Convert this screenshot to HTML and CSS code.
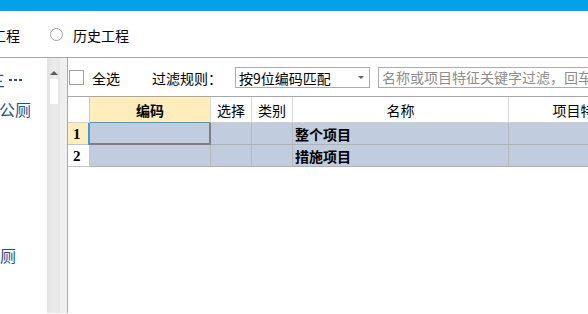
FILE: index.html
```html
<!DOCTYPE html>
<html lang="zh-CN">
<head>
<meta charset="utf-8">
<link rel="stylesheet" href="styles.css">
</head>
<body>
<div class="topbar"></div>
<div class="tabs">
  <span class="tab-cur">工程</span>
  <span class="radio"></span>
  <span class="tab-label">历史工程</span>
</div>
<div class="main">
  <div class="tree">
    <div class="node n1"><span class="clip-a">三</span><span class="dash"></span><span class="dash"></span><span class="dash"></span></div>
    <div class="node n2"><span class="clip-b">公厕</span></div>
    <div class="node n3">厕</div>
  </div>
  <div class="vscroll">
    <div class="track">
      <div class="arrow"></div>
      <div class="thumb"></div>
    </div>
  </div>
  <div class="content">
    <div class="toolbar">
      <span class="check"></span>
      <span class="lbl-all">全选</span>
      <span class="lbl-filter">过滤规则：</span>
      <div class="select"><span>按9位编码匹配</span><span class="caret"></span></div>
      <div class="search">名称或项目特征关键字过滤，回车</div>
    </div>
    <div class="grid">
      <div class="c hdr rh"></div>
      <div class="c hdr code">编码</div>
      <div class="c hdr">选择</div>
      <div class="c hdr">类别</div>
      <div class="c hdr">名称</div>
      <div class="c hdr">项目特征</div>

      <div class="c rh cur">1</div>
      <div class="c row sel"></div>
      <div class="c row"></div>
      <div class="c row"></div>
      <div class="c row name">整个项目</div>
      <div class="c row"></div>

      <div class="c rh">2</div>
      <div class="c row"></div>
      <div class="c row"></div>
      <div class="c row"></div>
      <div class="c row name">措施项目</div>
      <div class="c row"></div>
    </div>
  </div>
</div>
</body>
</html>
```
FILE: styles.css
```css
html, body {
  margin: 0;
  padding: 0;
}
body {
  width: 588px;
  height: 314px;
  overflow: hidden;
  background: #ffffff;
  font-family: "Noto Sans CJK SC", "Noto Sans", sans-serif;
  font-size: 14px;
  color: #000;
}
.topbar {
  height: 11px;
  background: #00a2e8;
}
.tabs {
  height: 47px;
  display: flex;
  align-items: center;
  border-bottom: 1px solid #a8a8a8;
  overflow: hidden;
  padding-top: 1px;
  box-sizing: border-box;
}
.tab-cur {
  margin-left: -8px;
  line-height: 16px;
}
.radio {
  width: 11px;
  height: 11px;
  border: 1px solid #a0a0a0;
  border-radius: 50%;
  margin-left: 30px;
  box-sizing: content-box;
}
.tab-label {
  margin-left: 10px;
  line-height: 16px;
}
.main {
  display: flex;
  height: 255px;
}
.tree {
  width: 47px;
  overflow: hidden;
  color: #1f4e8c;
  flex: none;
  font-size: 16px;
}
.node {
  height: 16px;
  line-height: 16px;
  white-space: nowrap;
  display: flex;
  align-items: center;
}
.n1 { margin-top: 14px; }
.n2 { margin-top: 13px; }
.n3 { margin-top: 130px; }
.clip-a { margin-left: -11px; }
.clip-b { margin-left: -1px; }
.dash {
  display: inline-block;
  width: 3px;
  height: 2px;
  background: #1f4e8c;
  margin-left: 2px;
  flex: none;
}
.clip-a + .dash { margin-left: 4px; }
.vscroll {
  width: 20px;
  flex: none;
  background: #efefef;
  border-right: 1px solid #a8a8a8;
}
.track {
  width: 13px;
  height: 100%;
  background: linear-gradient(to right, #e2e2e2, #ececec 60%, #e4e4e4);
  padding-top: 13px;
  box-sizing: border-box;
}
.arrow {
  margin-left: 3px;
  width: 0;
  height: 0;
  border-left: 4px solid transparent;
  border-right: 4px solid transparent;
  border-bottom: 4px solid #5a5a5a;
}
.thumb {
  margin: 4px 0 0 3px;
  width: 8px;
  height: 25px;
  background: #ffffff;
}
.content {
  flex: 1;
  min-width: 0;
  overflow: hidden;
}
.toolbar {
  height: 38px;
  display: flex;
  align-items: center;
  white-space: nowrap;
  padding-top: 1px;
  box-sizing: border-box;
}
.check {
  width: 13px;
  height: 13px;
  border: 1px solid #a0a0a0;
  margin-left: 1px;
  flex: none;
}
.lbl-all {
  margin-left: 8px;
  line-height: 16px;
}
.lbl-filter {
  margin-left: 32px;
  line-height: 16px;
}
.select {
  margin-left: 13px;
  width: 135px;
  height: 21px;
  border: 1px solid #acacac;
  box-sizing: border-box;
  display: flex;
  align-items: center;
  padding-left: 3px;
  line-height: 16px;
  flex: none;
}
.select span:first-child { flex: 1; }
.caret {
  width: 0;
  height: 0;
  border-left: 3px solid transparent;
  border-right: 3px solid transparent;
  border-top: 3px solid #606060;
  margin-right: 5px;
}
.search {
  margin-left: 8px;
  height: 21px;
  border: 1px solid #acacac;
  box-sizing: border-box;
  padding-left: 3px;
  line-height: 18px;
  color: #8c8c8c;
  flex: none;
  width: 260px;
}
.grid {
  display: grid;
  grid-template-columns: 22px 121px 41px 41px 216px 144px;
  grid-template-rows: 26px 22px 22px;
  border-top: 1px solid #a8a8a8;
  width: 585px;
}
.c {
  border-right: 1px solid #c4c4c4;
  border-bottom: 1px solid #c4c4c4;
  display: flex;
  align-items: center;
  justify-content: center;
  line-height: 16px;
  overflow: hidden;
  white-space: nowrap;
}
.hdr {
  background: #ffffff;
  border-right-color: #d8d8d8;
  border-bottom-color: #d0d0d0;
}
.code {
  background: #ffeebb;
  font-weight: bold;
  border-bottom: 1px solid #3a9fd6;
}
.rh {
  background: #ffffff;
  font-family: "Liberation Serif", "DejaVu Serif", serif;
  font-weight: bold;
  font-size: 15px;
  justify-content: flex-start;
  padding-left: 5px;
  border-right-color: #c8c8c8;
}
.hdr.rh { padding-left: 0; }
.rh.cur { background: #ffeebb; }
.row {
  background: #c1cddf;
  border-right-color: #b8b8b8;
  border-bottom-color: #b0b0b0;
}
.sel {
  border-left: 2px solid #3a9fd6;
  border-right: 2px solid #808080;
  border-bottom: 2px solid #808080;
  margin-left: -2px;
}
.name {
  justify-content: flex-start;
  padding-left: 2px;
  font-weight: bold;
}
```
